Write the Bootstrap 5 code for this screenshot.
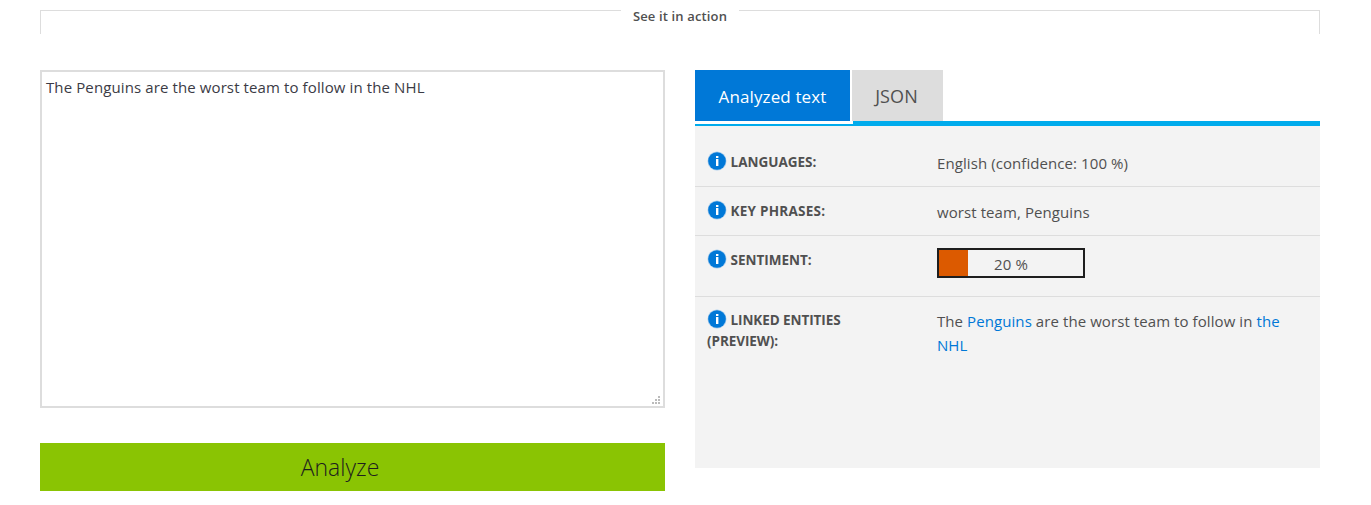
<!DOCTYPE html>
<html lang="en">
<head>
<meta charset="utf-8">
<meta name="viewport" content="width=device-width, initial-scale=1">
<title>Text analysis demo</title>
<link href="https://cdn.jsdelivr.net/npm/bootstrap@5.3.0/dist/css/bootstrap.min.css" rel="stylesheet">
<style>
body{font-family:"Open Sans","Noto Sans",sans-serif;font-size:15px;line-height:24px;color:#505050;overflow:hidden}
.demo{width:1280px;margin-left:40px;padding-top:10px}
.demo-head{height:24px;border:1px solid #ddd;border-bottom:0}
.demo-head span{background:#fff;margin-top:-6px;height:22px;line-height:22px;font-size:13px;font-weight:600;letter-spacing:.14px;width:118px;white-space:nowrap}
.panes{gap:30px;margin-top:36px}
.panes>div{width:625px}
.source-text{height:338px;border:2px solid #ddd;border-radius:0;padding:3px 4px;font-size:15px;line-height:24px;letter-spacing:.11px;color:#3b3b45}
.grip{right:3px;bottom:2px}
.analyze{height:48px;margin-top:35px;background:#8ac403;color:#1e1e1e;border-radius:0;font-size:23px;font-weight:300;line-height:46px;padding:0 25px 0 0;border:0}
.tabs{height:56px;border-bottom:5px solid #00abec;gap:2px}
.tabs .tab{height:51px;background:#ddd;color:#505050;font-size:17px;letter-spacing:.12px;line-height:53px;width:91px;white-space:nowrap}
.tabs .tab+.tab{font-size:18px;padding-right:2px}
.tabs .tab.active{width:155px;background:#0078d7;color:#fff;position:relative}
.tabs .tab.active::after{content:"";position:absolute;left:0;top:51px;width:158px;height:3px;background:#fff}
.results{background:#f3f3f3;height:342px;padding-top:12px}
.item{padding:12px 12px 0 12px;height:49px;border-bottom:1px solid #ddd}
.item.tall{height:61px}
.item:last-child{border:0}
.item dt{width:230px;font-size:13.5px;line-height:21px;font-weight:700;padding:1px 60px 0 0}
.item:last-child dt{padding-top:0}
.item:last-child dt span{letter-spacing:-.08px}
.item .wide{letter-spacing:.25px}
.item dt svg{vertical-align:-4px}
.item dd{margin:1px 0 0;flex:1;letter-spacing:.08px}
.item.tall dd,.item:last-child dd{margin-top:0}
.item a{color:#0078d7;text-decoration:none}
.meter{width:148px;height:30px;border:2px solid #1e1e1e;line-height:29px}
.meter i{background:#dc5a00;left:0;top:0;height:26px}
</style>
</head>
<body>
<svg class="d-none"><symbol id="info" viewBox="0 0 20 20"><circle cx="10" cy="10" r="9.5" fill="#a9cdec"/><circle cx="10" cy="10" r="8.8" fill="#0078d7"/><path d="M9 5h2.4v2H9zM9 8h2.4v7H9z" fill="#fff"/></symbol></svg>
<main class="demo">
<div class="demo-head d-flex justify-content-center align-items-start"><span class="text-center">See it in action</span></div>
<div class="panes d-flex">
<div>
<div class="source-text form-control position-relative">The Penguins are the worst team to follow in the NHL
<svg class="grip position-absolute" width="8" height="8" fill="#bbb" shape-rendering="crispEdges"><path d="M6 0h2v2H6zM3 3h2v2H3zM6 3h2v2H6zM0 6h2v2H0zM3 6h2v2H3zM6 6h2v2H6z"/></svg></div>
<button class="analyze btn w-100 d-block">Analyze</button>
</div>
<div>
<div class="tabs d-flex text-center"><div class="tab active">Analyzed text</div><div class="tab">JSON</div></div>
<dl class="results mb-0">
<div class="item d-flex"><dt><svg width="20" height="20"><use href="#info"/></svg> <span>LANGUAGES:</span></dt><dd>English (confidence: 100 %)</dd></div>
<div class="item d-flex"><dt><svg width="20" height="20"><use href="#info"/></svg> <span class="wide">KEY PHRASES:</span></dt><dd>worst team, Penguins</dd></div>
<div class="item tall d-flex"><dt><svg width="20" height="20"><use href="#info"/></svg> <span>SENTIMENT:</span></dt><dd><div class="meter position-relative text-center"><i class="position-absolute" style="width:20%"></i>20 %</div></dd></div>
<div class="item d-flex"><dt><svg width="20" height="20"><use href="#info"/></svg> <span>LINKED ENTITIES</span><br><span class="wide">(PREVIEW):</span></dt><dd>The <a href="#">Penguins</a> are the worst team to follow in <a href="#">the<br>NHL</a></dd></div>
</dl>
</div>
</div>
</main>
<script src="https://cdn.jsdelivr.net/npm/bootstrap@5.3.0/dist/js/bootstrap.bundle.min.js"></script>
</body>
</html>
